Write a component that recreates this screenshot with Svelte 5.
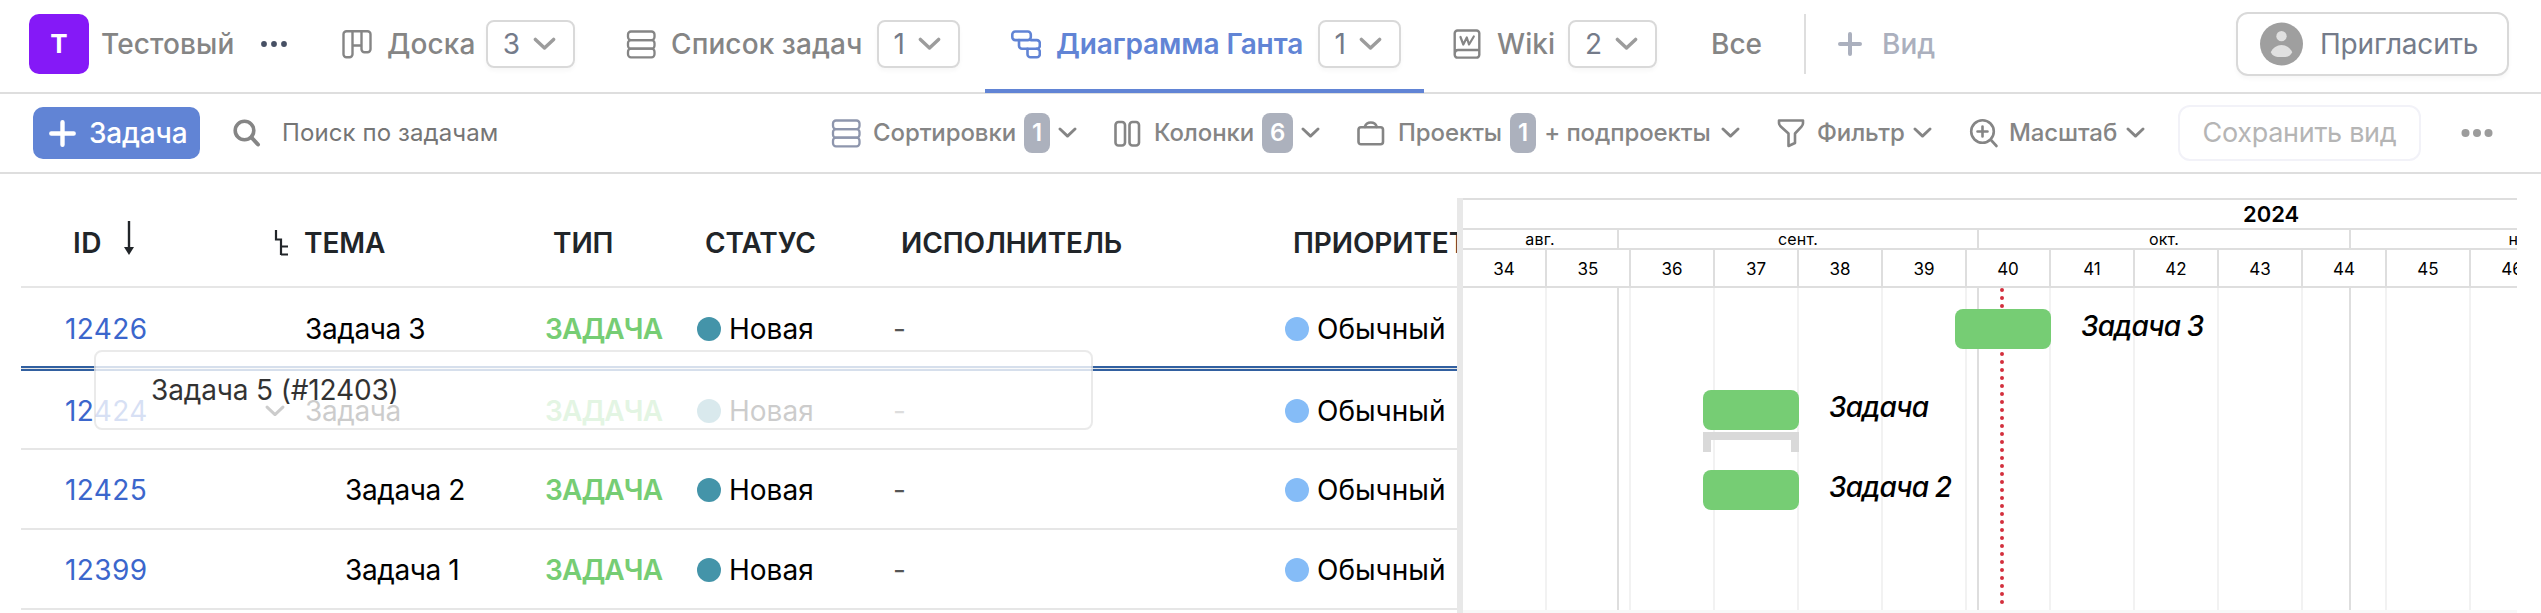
<script>
  const tabs = [
    { icon: 'board', label: 'Доска', count: 3, width: 284 },
    { icon: 'list', label: 'Список задач', count: 1, width: 385 },
    { icon: 'gantt', label: 'Диаграмма Ганта', count: 1, width: 439, active: true },
    { icon: 'wiki', label: 'Wiki', count: 2, width: 258 }
  ];
  const tools = [
    { icon: 'list', label: 'Сортировки', badge: 1, width: 246, lead: 42, cool: true },
    { icon: 'columns', label: 'Колонки', badge: 6, width: 206, lead: 40 },
    { icon: 'case', label: 'Проекты', badge: 1, after: '+ подпроекты', width: 383, lead: 41 },
    { icon: 'filter', label: 'Фильтр', width: 155, lead: 40 },
    { icon: 'zoom', label: 'Масштаб', width: 176, lead: 40 }
  ];
  const rows = [
    { id: 12426, name: 'Задача 3', level: 0 },
    { id: 12424, name: 'Задача', level: 0, open: true },
    { id: 12425, name: 'Задача 2', level: 1 },
    { id: 12399, name: 'Задача 1', level: 1 }
  ];
  const weeks = [34, 35, 36, 37, 38, 39, 40, 41, 42, 43, 44, 45, 46];
  const months = [
    { name: 'авг.', width: 156 },
    { name: 'сент.', width: 360 },
    { name: 'окт.', width: 372 },
    { name: 'нояб.', width: 360 }
  ];
  const bars = [
    { left: 492, top: 21, name: 'Задача 3' },
    { left: 240, top: 102, name: 'Задача', parent: true },
    { left: 240, top: 182, name: 'Задача 2' }
  ];
</script>

{#snippet icon(name)}
  <svg class="icon" viewBox="0 0 30 30" width="30" height="30" fill="none" stroke="currentColor" stroke-width="2.6" stroke-linejoin="round" stroke-linecap="round">
    {#if name === 'board'}
      <path d="M4.5 2.3h21a3 3 0 0 1 3 3v15a3 3 0 0 1-3 3h-3a3 3 0 0 1-3-3V2.3M10.5 2.3v23a3 3 0 0 1-3 3H4.500a3 3 0 0 1-3-3V5.300a3 3 0 0 1 3-3M10.500 16.500h9" stroke-width="2.4" />
    {:else if name === 'list'}
      <rect x="2" y="2.500" width="26.500" height="8.600" rx="3" stroke-width="2.300" />
      <rect x="2" y="11.100" width="26.500" height="8.600" rx="3" stroke-width="2.300" />
      <rect x="2" y="19.700" width="26.500" height="8.600" rx="3" stroke-width="2.300" />
    {:else if name === 'gantt'}
      <rect x="1.300" y="2.500" width="18.500" height="8.600" rx="3" />
      <path d="M19.800 11.100h6a3 3 0 0 1 3 3v2.600a3 3 0 0 1-3 3H11a3 3 0 0 1-3-3v-5.600" />
      <path d="M16.500 19.700v5.600a3 3 0 0 0 3 3h6.300a3 3 0 0 0 3-3v-2.600a3 3 0 0 0-3-3" />
    {:else if name === 'wiki'}
      <path d="M4.500 1.500h19a2.800 2.800 0 0 1 2.800 2.800v21.500a2.800 2.800 0 0 1-2.800 2.800h-19a2.800 2.800 0 0 1-2.800-2.800V4.300a2.800 2.800 0 0 1 2.800-2.800ZM1.700 25.500c0-3 1-4.500 3.500-4.500h21" stroke-width="2.400" />
      <path d="M7.500 8l2.800 7.500 3.500-7 2.200 7 4.800-8" stroke-width="2.200" />
    {:else if name === 'columns'}
      <rect x="1.500" y="4" width="9.500" height="23.500" rx="3" />
      <rect x="15.500" y="4" width="9.500" height="23.500" rx="3" />
    {:else if name === 'case'}
      <rect x="1.500" y="9.300" width="24.500" height="17" rx="2.500" />
      <path d="M8 9V8.500c.8-2.600 2.800-4 5.800-4s5 1.400 5.800 4V9" />
    {:else if name === 'filter'}
      <path d="M2 2.500h24v2.800c0 1.500-.5 2.300-1.500 3.300L18 15.500v9.500l-6.500 3V15.500L4 8.700c-1.300-1.200-2-2-2-3.500Z" />
    {:else if name === 'zoom'}
      <circle cx="13.500" cy="13.500" r="11.300" /><path d="M22 22l5.500 6M13.500 8.500v10M8.500 13.500h10" />
    {/if}
  </svg>
{/snippet}

{#snippet chevron(w)}
  <svg class="chev" viewBox="0 0 24 14" width={w} height={w * 14 / 24} fill="none" stroke="currentColor" stroke-width="3.600" stroke-linecap="round" stroke-linejoin="round"><path d="M2.500 2.500 12 11.500 21.500 2.500" /></svg>
{/snippet}

<div class="page">
  <header class="top">
    <div class="logo">Т</div>
    <div class="project">Тестовый</div>
    <svg class="dots" width="28" height="8" fill="currentColor"><circle cx="4" cy="4" r="2.900" /><circle cx="14" cy="4" r="2.900" /><circle cx="24" cy="4" r="2.900" /></svg>
    <nav>
      {#each tabs as t}
        <div class="tab" class:active={t.active} style:width="{t.width}px">
          {@render icon(t.icon)}
          <span>{t.label}</span>
          <div class="count">{t.count}<i>{@render chevron(23)}</i></div>
        </div>
      {/each}
    </nav>
    <div class="all">Все</div>
    <div class="addview">
      <svg width="24" height="24" fill="none" stroke="currentColor" stroke-width="4" stroke-linecap="round"><path d="M12 2v20M2 12h20" /></svg>
      <span>Вид</span>
    </div>
    <div class="invite">
      <svg width="43" height="44" viewBox="0 0 44 44"><circle cx="22" cy="22" r="22" fill="#9f9f9f" /><circle cx="22" cy="14" r="5.300" fill="#e0e0e0" /><path d="M11 30.500c2-4.500 6.500-7.500 11-7.500s9 3 11 7.500c-2 3.500-4 4.700-7 4.700h-8c-3 0-5-1.200-7-4.700Z" fill="#e0e0e0" /></svg>
      <span>Пригласить</span>
    </div>
  </header>

  <div class="tools">
    <div class="create">
      <svg width="27" height="27" fill="none" stroke="currentColor" stroke-width="4.400" stroke-linecap="round"><path d="M13.500 2.300v22.400M2.300 13.500h22.400" /></svg>
      <span>Задача</span>
    </div>
    <svg class="search" width="28" height="28" fill="none" stroke="currentColor" stroke-width="3.600" stroke-linecap="round"><circle cx="11.500" cy="11.500" r="9.300" /><path d="M18.500 18.500 25 25.500" stroke-width="4" /></svg>
    <div class="query">Поиск по задачам</div>
    <div class="filters">
      {#each tools as t}
        <div class="tool" style:width="{t.width}px">
          <div class="lead" class:cool={t.cool} style:width="{t.lead}px">{@render icon(t.icon)}</div>
          <span>{t.label}</span>
          {#if t.badge}<b>{t.badge}</b>{/if}
          {#if t.after}<span>{t.after}</span>{/if}
          <i>{@render chevron(19)}</i>
        </div>
      {/each}
    </div>
    <div class="save">Сохранить вид</div>
    <svg class="more" width="32" height="10" fill="currentColor"><circle cx="4.500" cy="5" r="4" /><circle cx="16" cy="5" r="4" /><circle cx="27.500" cy="5" r="4" /></svg>
  </div>

  <main>
    <section class="grid">
      <div class="row head">
        <div class="c-id">ID<svg width="10" height="34" viewBox="0 0 10 34"><path d="M5 0v27" stroke="currentColor" stroke-width="2.400" /><path d="M0 26h10L5 34Z" fill="currentColor" /></svg></div>
        <div class="c-name"><svg width="14" height="26" fill="none" stroke="currentColor" stroke-width="2.200"><path d="M2 0v9.500h5V25M7 16.500h7M7 24.500h7" /></svg>ТЕМА</div>
        <div>ТИП</div>
        <div>СТАТУС</div>
        <div>ИСПОЛНИТЕЛЬ</div>
        <div>ПРИОРИТЕТ</div>
      </div>
      {#each rows as r, n}
        <div class="row" class:target={n === 0} class:after={n === 1}>
          <div class="c-id">{r.id}</div>
          <div class="c-name" class:child={r.level}>{#if r.open}<i>{@render chevron(20)}</i>{/if}{r.name}</div>
          <div class="type">ЗАДАЧА</div>
          <div class="c-status"><em></em>Новая</div>
          <div class="dash">-</div>
          <div class="c-prio"><em></em>Обычный</div>
        </div>
      {/each}
      <div class="ghost">Задача 5 (#12403)</div>
    </section>
    <section class="chart">
      <div class="year"><span>2024</span></div>
      <div class="months">{#each months as m}<div style:width="{m.width}px">{m.name}</div>{/each}</div>
      <div class="weeks">{#each weeks as w}<div>{w}</div>{/each}</div>
      <div class="canvas">
        <div class="lines">{#each weeks as w}<div></div>{/each}</div>
        <div class="lines strong">{#each months as m}<div style:width="{m.width}px"></div>{/each}</div>
        <svg class="today" width="4" height="322"><path d="M2 2V322" stroke="#d32f3d" stroke-width="4" stroke-linecap="round" stroke-dasharray="0 8" /></svg>
        {#each bars as b}
          <div class="bar" style:left="{b.left}px" style:top="{b.top}px">
            <span>{b.name}</span>
            {#if b.parent}<div class="bracket"></div>{/if}
          </div>
        {/each}
      </div>
    </section>
  </main>
</div>

<style>
  :global(body) { background: #fff; overflow: hidden; }
  * { box-sizing: border-box; }
  .page { width: 2541px; height: 613px; font: 400 28px/34px Inter, "Noto Sans", sans-serif; color: #000; white-space: nowrap; overflow: hidden; background: #fff; }
  svg { display: block; flex: none; }
  i, em { font-style: normal; }
  .top { height: 94px; border-bottom: 2px solid #dedede; display: flex; padding: 12px 32px 0 29px; }
  .logo { width: 60px; height: 60px; margin-top: 2px; border-radius: 10px; background: #8519f7; color: #fff; font-size: 26px; font-weight: 700; display: grid; place-items: center; }
  .project { width: 159px; margin: 15px 0 0 12px; color: #858585; font-weight: 500; letter-spacing: .1px; }
  .dots { color: #465064; margin-top: 28px; width: 28px; }
  nav { display: flex; margin: -12px 0 -1px 28px; }
  .tab { display: flex; align-items: center; height: 93px; padding: 0 25px 1px 26px; color: #858585; font-weight: 500; letter-spacing: .1px; border-bottom: 4px solid transparent; }
  .tab span { margin-left: 15px; }
  .tab.active { color: #6184d5; font-weight: 600; letter-spacing: -.1px; border-color: #6184d5; padding-right: 23px; }
  .tab:last-child { padding-left: 29px; }
  .tab:last-child span { margin-left: 14px; }
  .count { margin-left: auto; height: 48px; border: 2px solid #d9d9d9; border-radius: 8px; padding: 0 17px 0 15px; display: flex; align-items: center; gap: 13px; color: #747b8a; font-weight: 400; letter-spacing: 0; box-shadow: 0 3px 4px #00000008; }
  .count i { color: #9c9c9c; }
  .all { width: 93px; margin: 15px 0 0 29px; color: #858585; font-weight: 500; }
  .addview { height: 60px; margin-top: 2px; border-left: 2px solid #dedede; padding-left: 32px; display: flex; align-items: center; gap: 20px; color: #abb0be; font-weight: 500; }
  .invite { margin-left: auto; width: 273px; height: 64px; border: 2px solid #d9d9d9; border-radius: 12px; display: flex; align-items: center; padding-left: 22px; gap: 17px; color: #747b8a; letter-spacing: -.2px; box-shadow: 0 3px 4px #00000008; }
  .tools { height: 80px; border-bottom: 2px solid #dedede; display: flex; align-items: center; padding-left: 33px; }
  .create { width: 167px; height: 52px; border-radius: 10px; background: #6184d5; color: #fff; display: flex; align-items: center; padding-left: 16px; gap: 13px; font-weight: 500; letter-spacing: -.2px; }
  .search { margin-left: 33px; color: #858585; }
  .query { margin-left: 21px; width: 549px; color: #757575; font-size: 24px; letter-spacing: .1px; }
  .filters { display: flex; gap: 37px; font-size: 24px; color: #858585; font-weight: 500; letter-spacing: -.1px; }
  .tool { display: flex; align-items: center; height: 40px; }
  .lead { flex: none; }
  .lead.cool { color: #8e96ad; }
  .tool b { height: 40px; margin: 0 8px; padding: 2px 8px; border-radius: 8px; background: #acb1bd; color: #fff; font-weight: 600; line-height: 36px; letter-spacing: 0; }
  .tool i { margin-left: auto; }
  .save { margin-left: 33px; width: 243px; height: 56px; border: 2px solid #f2f2f8; border-radius: 12px; color: #b5b5b5; text-align: center; line-height: 52px; font-size: 27px; letter-spacing: -.3px; }
  .more { margin-left: 40px; color: #9c9c9c; }
  main { display: flex; height: 439px; padding-top: 24px; }
  .grid { position: relative; width: 1436px; margin-left: 21px; overflow: hidden; }
  .row { display: grid; grid-template-columns: 284px 240px 152px 196px 392px 260px; height: 80px; align-items: center; border-bottom: 2px solid #e6e6e6; padding-top: 2px; }
  .row > div { display: flex; align-items: center; }
  .head { height: 90px; padding-top: 2px; color: #212529; font-weight: 600; letter-spacing: -.1px; }
  .head > div { padding-left: 8px; }
  .head > .c-id { padding-left: 52px; gap: 22px; }
  .head > .c-id svg { margin-top: -10px; }
  .head > .c-name { padding: 0; margin-left: -31px; gap: 16px; }
  .c-id { padding-left: 44px; color: #3b66cc; letter-spacing: .4px; }
  .head .c-id { color: inherit; }
  .row:not(.head) .c-name { letter-spacing: -.4px; }
  .child { padding-left: 40px; }
  .c-name i { width: 40px; margin-left: -40px; color: #000; }
  .type { color: #76cd74; font-weight: 600; letter-spacing: -.9px; }
  em { width: 24px; height: 24px; border-radius: 50%; background: #4494a9; margin-right: 8px; }
  .c-prio em { background: #85bcf7; }
  .dash { color: #555; }
  .target { height: 83px; padding: 4px 0 5px; border: 0; background: linear-gradient(#3260a0 2px, #e6e6e6 2px 3px, #3260a0 3px) bottom / 100% 5px no-repeat; }
  .after { height: 79px; }
  .ghost { position: absolute; left: 73px; top: 152px; width: 999px; height: 80px; border: 2px solid #e6e6e6; border-radius: 8px; background: #fff; opacity: .8; padding: 21px 0 0 55px; letter-spacing: -.15px; }
  .chart { width: 1060px; border-left: 6px solid #e8e8e8; overflow: hidden; position: relative; background: #fff; }
  .year { height: 32px; border: 2px solid #dedede; border-width: 2px 0; padding-left: 780px; font-weight: 600; font-size: 22px; line-height: 28px; }
  .months { display: flex; height: 20px; border-bottom: 2px solid #dedede; font-size: 16px; line-height: 19px; text-align: center; letter-spacing: .2px; }
  .months div, .weeks div, .lines div { flex: none; border-right: 2px solid #dedede; }
  .weeks { display: flex; height: 38px; border-bottom: 2px solid #dedede; font-size: 17px; line-height: 39px; text-align: center; }
  .weeks div, .lines div { width: 84px; }
  .canvas { position: relative; height: 325px; }
  .canvas::after { content: ""; position: absolute; left: 0; right: 0; top: 322px; height: 3px; background: #f8f8f8; }
  .lines { position: absolute; inset: 0; display: flex; }
  .lines div { border-color: #f2f2f2; }
  .strong div { border-color: #dedede; }
  .today { position: absolute; left: 537px; top: 0; }
  .bar { position: absolute; width: 96px; height: 40px; border-radius: 8px; background: #76cd74; }
  .bar span { position: absolute; left: 126px; top: 0; font-style: italic; font-weight: 500; letter-spacing: -.8px; }
  .bracket { position: absolute; top: 42px; width: 96px; height: 20px; border: 8px solid #d9d9d9; border-bottom: 0; }
</style>
